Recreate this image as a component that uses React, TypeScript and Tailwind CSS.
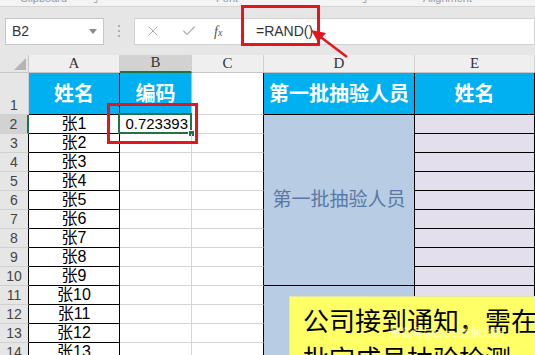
import { X, Check } from 'lucide-react';

const names = Array.from({ length: 13 }, (_, i) => `张${i + 1}`);

function RibbonEdge() {
  // only the bottom sliver of the ribbon group labels is visible
  return (
    <div className="h-[7px] bg-[#f3f3f3] border-b border-[#d6d6d6] overflow-hidden flex text-[11px] leading-[11px] text-[#9a9a9a]">
      <span className="-mt-[7px] ml-[20px]">Clipboard</span>
      <span className="-mt-[7px] ml-[26px]">⌟</span>
      <span className="-mt-[7px] ml-[118px]">Font</span>
      <span className="-mt-[7px] ml-[124px]">⌟</span>
      <span className="-mt-[7px] ml-[56px]">Alignment</span>
    </div>
  );
}

function FormulaBar() {
  return (
    <div className="h-[48px] bg-[#e6e6e6] flex items-center pl-[5px]">
      <div className="w-[99px] h-[27px] bg-white border border-[#c6c6c6] flex items-center justify-between pl-[6px] pr-[6px]">
        <span className="text-[14px] text-[#333]">B2</span>
        <svg width="8" height="5" viewBox="0 0 8 5">
          <polygon points="0,0 8,0 4,5" fill="#8a8a8a" />
        </svg>
      </div>
      <div className="w-[30px] flex flex-col items-center gap-[3px]">
        <span className="w-[2px] h-[2px] bg-[#b0b0b0]" />
        <span className="w-[2px] h-[2px] bg-[#b0b0b0]" />
        <span className="w-[2px] h-[2px] bg-[#b0b0b0]" />
      </div>
      <div className="w-[107px] h-[27px] bg-white border border-[#d0d0d0] border-r-0 flex items-center">
        <X size={16} strokeWidth={1.4} className="text-[#a8a8a8] ml-[10px]" />
        <Check size={16} strokeWidth={1.6} className="text-[#a8a8a8] ml-[20px]" />
        <span className="ml-[17px] italic font-['Liberation_Serif',serif] text-[14px] text-[#555]">
          f<span className="text-[10px]">x</span>
        </span>
      </div>
      <div className="flex-1 h-[27px] bg-white border border-[#d0d0d0] flex items-center pl-[14px]">
        <span className="text-[14px] text-[#333]">=RAND()</span>
      </div>
    </div>
  );
}

function ColHead({ label, selected }: { label: string; selected?: boolean }) {
  return (
    <div
      className={`flex items-end justify-center border-r border-[#d0d0d0] font-['Liberation_Serif',serif] text-[15px] leading-[17px] text-[#333] ${
        selected ? 'bg-[#d2d2d2] border-b-2 border-b-[#217346]' : 'bg-[#efefef] border-b border-b-[#c6c6c6]'
      }`}
    >
      {label}
    </div>
  );
}

function Sheet() {
  return (
    <div className="grid grid-cols-[29px_91px_72px_72px_151px_120px] grid-rows-[18px_42px_repeat(13,19px)]">
      {/* column headers */}
      <div className="bg-[#e6e6e6] border-r border-b border-[#c6c6c6] relative">
        <svg className="absolute right-[2px] bottom-[2px]" width="12" height="12" viewBox="0 0 12 12">
          <polygon points="12,0 12,12 0,12" fill="#b4b4b4" />
        </svg>
      </div>
      <ColHead label="A" />
      <ColHead label="B" selected />
      <ColHead label="C" />
      <ColHead label="D" />
      <ColHead label="E" />

      {/* row 1 */}
      <div className="bg-[#e6e6e6] border-r border-b border-[#d0d0d0] flex items-end justify-center text-[14px] leading-[18px] text-[#444]">1</div>
      <div className="bg-[#00b0f0] border-r border-b border-black flex items-center justify-center text-white font-bold text-[20px]">姓名</div>
      <div className="bg-[#00b0f0] border-r border-[#7fcfee] border-b border-b-black flex items-center justify-center text-white font-bold text-[20px]">编码</div>
      <div className="border-r border-r-black border-b border-b-[#d4d4d4]" />
      <div className="bg-[#00b0f0] border-r border-b border-black flex items-center justify-center text-white font-bold text-[20px]">第一批抽验人员</div>
      <div className="bg-[#00b0f0] border-r border-b border-black flex items-center justify-center text-white font-bold text-[20px]">姓名</div>

      {names.map((name, i) => {
        const r = i + 2;
        return (
          <div key={r} className="contents">
            <div
              className={`flex items-center justify-center text-[14px] text-[#444] border-b border-[#d0d0d0] ${
                r === 2 ? 'bg-[#d2d2d2] border-r-2 border-r-[#217346]' : 'bg-[#e6e6e6] border-r border-r-black'
              }`}
            >
              {r}
            </div>
            <div className="border-r border-b border-black flex items-center justify-center text-[16px] leading-[18px] text-black">
              {name}
            </div>
            <div className="border-r border-b border-[#d4d4d4] relative flex items-center justify-end pr-[3px]">
              {r === 2 && (
                <>
                  <span className="text-[15px] text-black">0.723393</span>
                  <div className="absolute -left-[2px] -top-[2px] -right-[1px] -bottom-[1px] border-2 border-[#217346]" />
                  <div className="absolute -right-[4px] -bottom-[4px] w-[7px] h-[7px] bg-[#217346] border border-white" />
                </>
              )}
            </div>
            <div className="border-r border-r-black border-b border-b-[#d4d4d4]" />
            {r === 2 && (
              <div className="row-span-9 bg-[#b8cce4] border-r border-b border-black flex items-center justify-center text-[19px] text-[#5a78a3]">
                第一批抽验人员
              </div>
            )}
            {r === 11 && <div className="row-span-4 bg-[#b8cce4] border-r border-b border-black" />}
            <div className="bg-[#e4dfec] border-r border-b border-black" />
          </div>
        );
      })}
    </div>
  );
}

export default function App() {
  return (
    <div className="relative w-[535px] h-[355px] overflow-hidden bg-white font-['Liberation_Sans','Noto_Sans_CJK_SC',sans-serif]">
      <RibbonEdge />
      <FormulaBar />
      <Sheet />

      {/* annotation: box round the formula */}
      <div className="absolute left-[241px] top-[5px] w-[79px] h-[41px] border-[3px] border-[#e3161d]" />
      {/* annotation: box round B2 */}
      <div className="absolute left-[107px] top-[103px] w-[91px] h-[41px] border-[3px] border-[#e3161d]" />
      {/* annotation arrow */}
      <svg className="absolute left-0 top-0 pointer-events-none" width="535" height="355">
        <line x1="347" y1="57" x2="318" y2="35" stroke="#e3161d" strokeWidth="2.5" />
        <polygon points="311,30 326,33 318,42" fill="#e3161d" />
      </svg>

      {/* yellow note */}
      <div className="absolute left-[289px] top-[296px] w-[270px] h-[80px] bg-[#ffff66] border border-[#e4e4a8] pl-[13px] pt-[4px] font-['Noto_Sans_CJK_SC',sans-serif] text-[26px] leading-[38px] text-black whitespace-nowrap">
        <div>公司接到通知，需在</div>
        <div>批定成员抽验检测，要</div>
        <span className="absolute left-[100px] top-[30px] text-[11px] leading-[11px] text-white/60">搜狐号@Excel数据分析</span>
      </div>
    </div>
  );
}
